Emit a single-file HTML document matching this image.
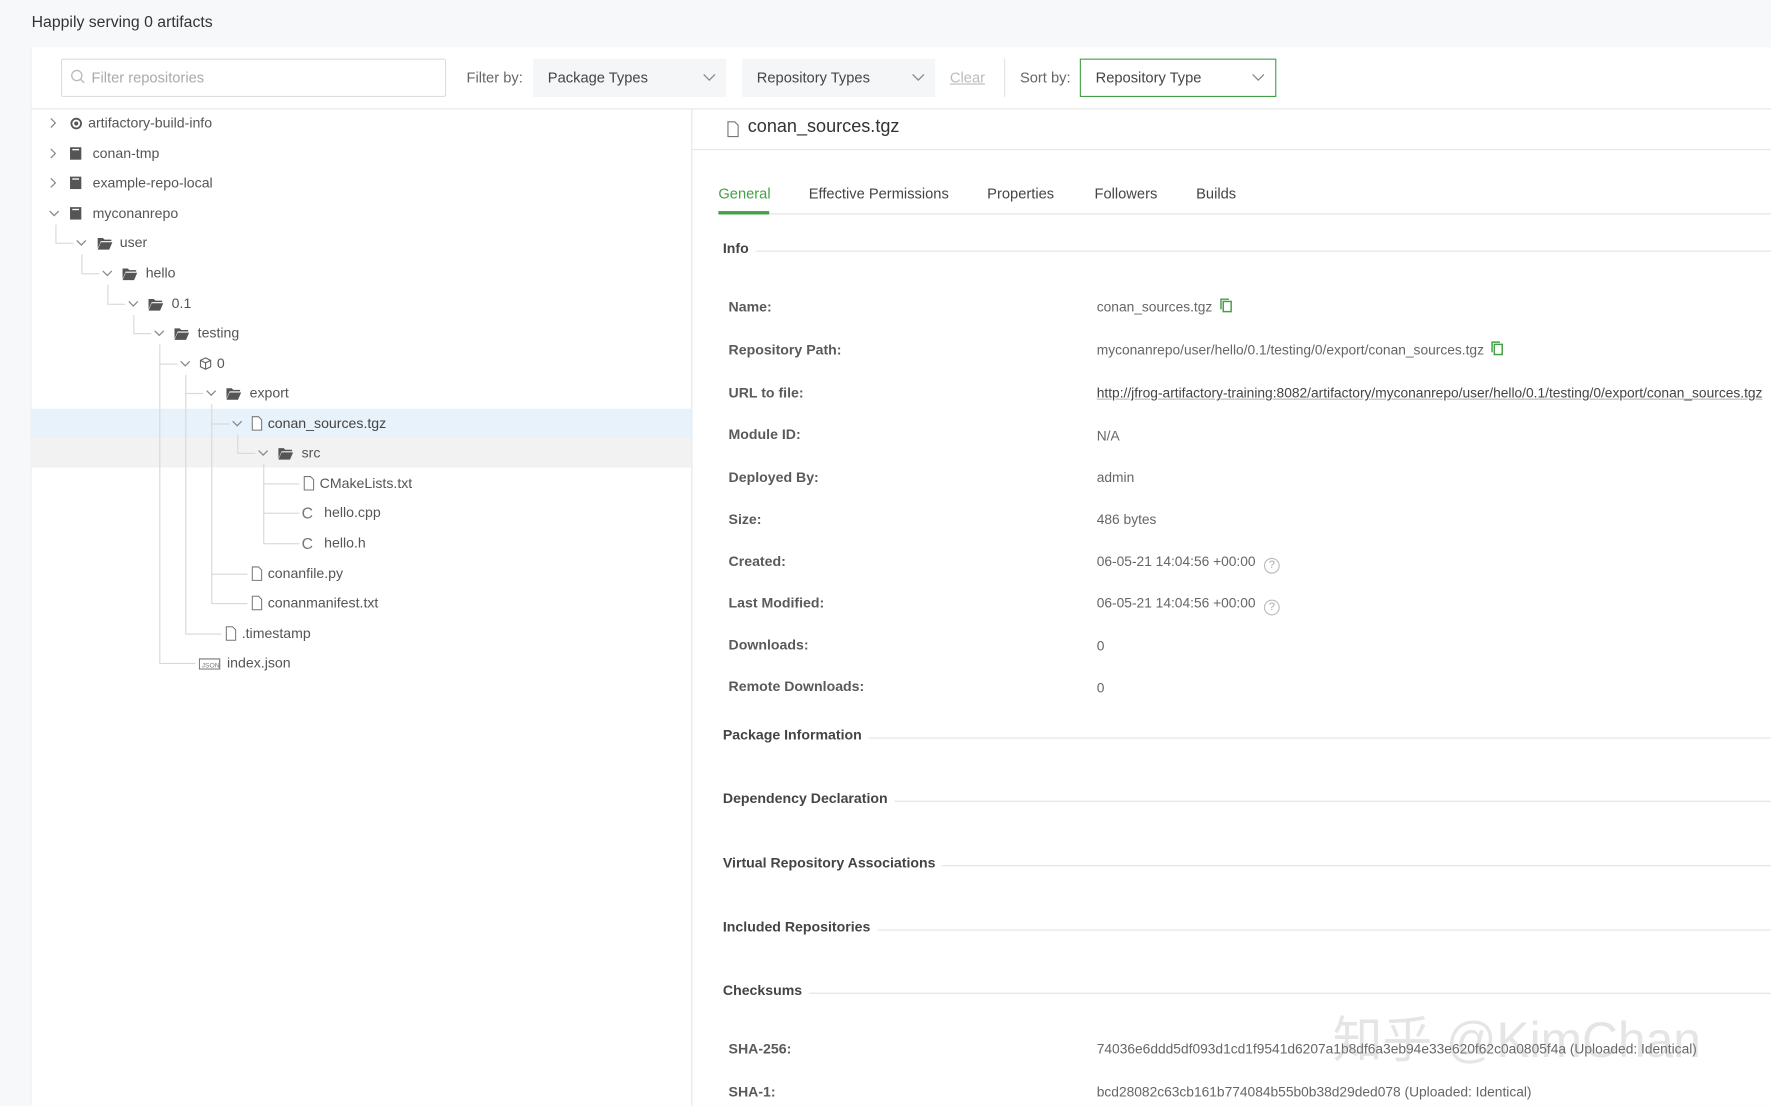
<!DOCTYPE html>
<html><head><meta charset="utf-8"><style>
*{margin:0;padding:0;box-sizing:border-box}
html,body{width:1771px;height:1105px;overflow:hidden;background:#f7f8fa}
#s{position:absolute;left:0;top:0;width:1568px;height:978px;transform:translate(0,1px) scale(1.1295);transform-origin:0 0;font-family:"Liberation Sans","Noto Sans CJK SC",sans-serif;color:#555;font-size:12.5px}
.a{position:absolute;white-space:nowrap}
.r{position:absolute;height:20px;line-height:20px;white-space:nowrap;color:#555;font-size:12.5px}
.vl{position:absolute;width:1px;background:#d8d8d8}
.hl{position:absolute;height:1px;background:#d8d8d8}
.lab{position:absolute;left:645px;color:#5a5a5a;font-size:12.5px;font-weight:600;line-height:20px}
.val{position:absolute;left:971px;color:#666;font-size:12.2px;line-height:20px;white-space:nowrap}
.sec{position:absolute;left:640px;right:0;height:20px;line-height:20px;font-weight:bold;color:#444;font-size:12.5px;display:flex;align-items:center}
.sec:after{content:"";flex:1;height:1px;background:#e3e3e3;margin-left:6px;margin-top:4px}
.dd{position:absolute;top:51px;height:34px;background:#f5f6f7;line-height:34px;padding-left:13px;color:#444;font-size:13px}
</style></head><body><div id="s">
<div class="a" style="left:28px;top:10px;font-size:14px;color:#333">Happily serving 0 artifacts</div>
<div class="a" style="left:27px;top:41px;width:1541px;height:937px;background:#fff;border-left:1px solid #eee"></div>
<div class="hl" style="left:28px;top:95px;width:1540px;background:#e6e6e6"></div>
<div class="a" style="left:54px;top:51px;width:341px;height:34px;border:1px solid #ddd;border-radius:2px"></div>
<svg class="a" style="left:62px;top:60px" width="14" height="14" viewBox="0 0 14 14"><circle cx="6" cy="6" r="4.5" fill="none" stroke="#bbb" stroke-width="1.2"/><path d="M9.3 9.3L12.5 12.5" stroke="#bbb" stroke-width="1.2"/></svg>
<div class="a" style="left:81px;top:60px;color:#aaa;font-size:13px">Filter repositories</div>
<div class="a" style="left:413px;top:60px;color:#666;font-size:13px">Filter by:</div>
<div class="dd" style="left:472px;width:171px">Package Types</div>
<div class="dd" style="left:657px;width:171px">Repository Types</div>
<svg class="a" style="left:622px;top:64px" width="12" height="8"><path d="M1 1l5 5 5-5" fill="none" stroke="#888" stroke-width="1.1"/></svg>
<svg class="a" style="left:807px;top:64px" width="12" height="8"><path d="M1 1l5 5 5-5" fill="none" stroke="#888" stroke-width="1.1"/></svg>
<div class="a" style="left:841px;top:60px;color:#bbb;font-size:13px;text-decoration:underline">Clear</div>
<div class="vl" style="left:889px;top:51px;height:34px;background:#e3e3e3"></div>
<div class="a" style="left:903px;top:60px;color:#666;font-size:13px">Sort by:</div>
<div class="a" style="left:956px;top:51px;width:174px;height:34px;border:1px solid #43a047;line-height:32px;padding-left:13px;color:#444;font-size:13px">Repository Type</div>
<svg class="a" style="left:1108px;top:64px" width="12" height="8"><path d="M1 1l5 5 5-5" fill="none" stroke="#888" stroke-width="1.1"/></svg>

<div class="vl" style="left:612px;top:96px;height:882px;background:#e6e6e6"></div>
<div class="a" style="left:28px;top:361px;width:584px;height:26px;background:#e8f2fa"></div>
<div class="a" style="left:28px;top:387px;width:584px;height:26px;background:#f2f2f2"></div>

<div class="vl" style="left:49px;top:198px;height:16px"></div><div class="hl" style="left:49px;top:214px;width:16px"></div>
<div class="vl" style="left:72px;top:224px;height:17px"></div><div class="hl" style="left:72px;top:241px;width:16px"></div>
<div class="vl" style="left:95px;top:251px;height:17px"></div><div class="hl" style="left:95px;top:268px;width:16px"></div>
<div class="vl" style="left:118px;top:278px;height:16px"></div><div class="hl" style="left:118px;top:294px;width:16px"></div>
<div class="vl" style="left:141px;top:304px;height:282px"></div><div class="hl" style="left:141px;top:321px;width:16px"></div><div class="hl" style="left:141px;top:586px;width:32px"></div>
<div class="vl" style="left:164px;top:331px;height:229px"></div><div class="hl" style="left:164px;top:347px;width:16px"></div><div class="hl" style="left:164px;top:560px;width:32px"></div>
<div class="vl" style="left:187px;top:357px;height:176px"></div><div class="hl" style="left:187px;top:374px;width:16px"></div><div class="hl" style="left:187px;top:507px;width:32px"></div><div class="hl" style="left:187px;top:533px;width:32px"></div>
<div class="vl" style="left:210px;top:384px;height:16px"></div><div class="hl" style="left:210px;top:400px;width:16px"></div>
<div class="vl" style="left:233px;top:410px;height:70px"></div><div class="hl" style="left:233px;top:427px;width:32px"></div><div class="hl" style="left:233px;top:453px;width:32px"></div><div class="hl" style="left:233px;top:480px;width:32px"></div>

<svg width="0" height="0" style="position:absolute"><defs>
<symbol id="cr" viewBox="0 0 10 10"><path d="M3 1l4 4-4 4" fill="none" stroke="#888" stroke-width="1.1"/></symbol>
<symbol id="cd" viewBox="0 0 10 10"><path d="M1 3l4 4 4-4" fill="none" stroke="#888" stroke-width="1.1"/></symbol>
<symbol id="fo" viewBox="0 0 16 14"><path d="M1 2h5l1.5 1.5H14V5H4L1 12z" fill="#555"/><path d="M4 6h11l-3 7H1z" fill="#555"/></symbol>
<symbol id="rp" viewBox="0 0 12 12"><rect x="1" y="0.5" width="10" height="11" fill="#555"/><rect x="3" y="2" width="6" height="1.2" fill="#fff"/></symbol>
<symbol id="fi" viewBox="0 0 12 14"><path d="M1.5 .5h6l3 3v10h-9z" fill="#fff" stroke="#777"/></symbol>
</defs></svg>

<div class="r" style="left:42px;top:98px"><svg width="10" height="10" style="vertical-align:-1px"><use href="#cr"/></svg></div>
<svg class="a" style="left:62px;top:103px" width="11" height="11"><circle cx="5.5" cy="5.5" r="4.3" fill="none" stroke="#555" stroke-width="1.6"/><circle cx="5.5" cy="5.5" r="1.8" fill="#555"/></svg>
<div class="r" style="left:78px;top:98px">artifactory-build-info</div>
<div class="r" style="left:42px;top:125px"><svg width="10" height="10" style="vertical-align:-1px"><use href="#cr"/></svg></div>
<svg class="a" style="left:61px;top:129px" width="12" height="12"><use href="#rp"/></svg><div class="r" style="left:82px;top:125px">conan-tmp</div>
<div class="r" style="left:42px;top:151px"><svg width="10" height="10" style="vertical-align:-1px"><use href="#cr"/></svg></div>
<svg class="a" style="left:61px;top:155px" width="12" height="12"><use href="#rp"/></svg><div class="r" style="left:82px;top:151px">example-repo-local</div>
<div class="r" style="left:43px;top:178px"><svg width="10" height="10" style="vertical-align:-1px"><use href="#cd"/></svg></div>
<svg class="a" style="left:61px;top:182px" width="12" height="12"><use href="#rp"/></svg><div class="r" style="left:82px;top:178px">myconanrepo</div>

<div class="r" style="left:67px;top:204px"><svg width="10" height="10" style="vertical-align:-1px"><use href="#cd"/></svg></div>
<svg class="a" style="left:85px;top:208px" width="16" height="13"><use href="#fo"/></svg><div class="r" style="left:106px;top:204px">user</div>
<div class="r" style="left:90px;top:231px"><svg width="10" height="10" style="vertical-align:-1px"><use href="#cd"/></svg></div>
<svg class="a" style="left:107px;top:235px" width="16" height="13"><use href="#fo"/></svg><div class="r" style="left:129px;top:231px">hello</div>
<div class="r" style="left:113px;top:258px"><svg width="10" height="10" style="vertical-align:-1px"><use href="#cd"/></svg></div>
<svg class="a" style="left:130px;top:262px" width="16" height="13"><use href="#fo"/></svg><div class="r" style="left:152px;top:258px">0.1</div>
<div class="r" style="left:136px;top:284px"><svg width="10" height="10" style="vertical-align:-1px"><use href="#cd"/></svg></div>
<svg class="a" style="left:153px;top:288px" width="16" height="13"><use href="#fo"/></svg><div class="r" style="left:175px;top:284px">testing</div>
<div class="r" style="left:159px;top:311px"><svg width="10" height="10" style="vertical-align:-1px"><use href="#cd"/></svg></div>
<svg class="a" style="left:176px;top:315px" width="12" height="12" viewBox="0 0 12 12"><path d="M6 1l4.5 2.2v5.6L6 11 1.5 8.8V3.2z M1.5 3.2L6 5.4l4.5-2.2 M6 5.4V11" fill="none" stroke="#666"/></svg><div class="r" style="left:192px;top:311px">0</div>
<div class="r" style="left:182px;top:337px"><svg width="10" height="10" style="vertical-align:-1px"><use href="#cd"/></svg></div>
<svg class="a" style="left:199px;top:341px" width="16" height="13"><use href="#fo"/></svg><div class="r" style="left:221px;top:337px">export</div>
<div class="r" style="left:205px;top:364px"><svg width="10" height="10" style="vertical-align:-1px"><use href="#cd"/></svg></div>
<svg class="a" style="left:222px;top:367px" width="11" height="14"><use href="#fi"/></svg><div class="r" style="left:237px;top:364px;color:#444">conan_sources.tgz</div>
<div class="r" style="left:228px;top:390px"><svg width="10" height="10" style="vertical-align:-1px"><use href="#cd"/></svg></div>
<svg class="a" style="left:245px;top:394px" width="16" height="13"><use href="#fo"/></svg><div class="r" style="left:267px;top:390px">src</div>
<svg class="a" style="left:268px;top:420px" width="11" height="14"><use href="#fi"/></svg><div class="r" style="left:283px;top:417px">CMakeLists.txt</div>
<div class="r" style="left:267px;top:443px;color:#777;font-size:14px">C</div><div class="r" style="left:287px;top:443px">hello.cpp</div>
<div class="r" style="left:267px;top:470px;color:#777;font-size:14px">C</div><div class="r" style="left:287px;top:470px">hello.h</div>
<svg class="a" style="left:222px;top:500px" width="11" height="14"><use href="#fi"/></svg><div class="r" style="left:237px;top:497px">conanfile.py</div>
<svg class="a" style="left:222px;top:526px" width="11" height="14"><use href="#fi"/></svg><div class="r" style="left:237px;top:523px">conanmanifest.txt</div>
<svg class="a" style="left:199px;top:553px" width="11" height="14"><use href="#fi"/></svg><div class="r" style="left:214px;top:550px">.timestamp</div>
<svg class="a" style="left:176px;top:580px" width="20" height="12"><rect x=".5" y="2.5" width="18" height="9" fill="#fff" stroke="#777"/><text x="2.5" y="10" font-size="6" fill="#777" font-family="Liberation Sans">JSON</text></svg><div class="r" style="left:201px;top:576px">index.json</div>

<svg class="a" style="left:643px;top:106px" width="12" height="15"><use href="#fi"/></svg>
<div class="a" style="left:662px;top:103px;font-size:16px;color:#333">conan_sources.tgz</div>
<div class="hl" style="left:613px;top:131px;width:955px;background:#e6e6e6"></div>
<div class="hl" style="left:636px;top:188px;width:932px;background:#e3e3e3"></div>
<div class="a" style="left:636px;top:186px;width:45px;height:3px;background:#43a047"></div>
<div class="a" style="left:636px;top:163px;color:#43a047;font-size:13px">General</div>
<div class="a" style="left:716px;top:163px;color:#444;font-size:13px">Effective Permissions</div>
<div class="a" style="left:874px;top:163px;color:#444;font-size:13px">Properties</div>
<div class="a" style="left:969px;top:163px;color:#444;font-size:13px">Followers</div>
<div class="a" style="left:1059px;top:163px;color:#444;font-size:13px">Builds</div>

<div class="sec" style="top:209px">Info</div>
<div class="lab" style="top:261px">Name:</div><div class="val" style="top:261px">conan_sources.tgz <svg width="11" height="13" style="vertical-align:-1px;margin-left:3px"><rect x="3" y="3" width="7" height="9" fill="none" stroke="#43a047" stroke-width="1.3"/><path d="M1 10V1h7" fill="none" stroke="#43a047" stroke-width="1.3"/></svg></div>
<div class="lab" style="top:299px">Repository Path:</div><div class="val" style="top:299px">myconanrepo/user/hello/0.1/testing/0/export/conan_sources.tgz <svg width="11" height="13" style="vertical-align:-1px;margin-left:3px"><rect x="3" y="3" width="7" height="9" fill="none" stroke="#43a047" stroke-width="1.3"/><path d="M1 10V1h7" fill="none" stroke="#43a047" stroke-width="1.3"/></svg></div>
<div class="lab" style="top:337px">URL to file:</div><div class="val" style="top:337px;color:#444;text-decoration:underline;text-decoration-color:#bbb">http://jfrog-artifactory-training:8082/artifactory/myconanrepo/user/hello/0.1/testing/0/export/conan_sources.tgz</div>
<div class="lab" style="top:374px">Module ID:</div><div class="val" style="top:375px">N/A</div>
<div class="lab" style="top:412px">Deployed By:</div><div class="val" style="top:412px">admin</div>
<div class="lab" style="top:449px">Size:</div><div class="val" style="top:449px">486 bytes</div>
<div class="lab" style="top:486px">Created:</div><div class="val" style="top:486px">06-05-21 14:04:56 +00:00 <span style="display:inline-block;width:14px;height:14px;border:1px solid #bbb;border-radius:50%;font-size:10px;line-height:12px;text-align:center;color:#aaa;margin-left:4px;vertical-align:-2px">?</span></div>
<div class="lab" style="top:523px">Last Modified:</div><div class="val" style="top:523px">06-05-21 14:04:56 +00:00 <span style="display:inline-block;width:14px;height:14px;border:1px solid #bbb;border-radius:50%;font-size:10px;line-height:12px;text-align:center;color:#aaa;margin-left:4px;vertical-align:-2px">?</span></div>
<div class="lab" style="top:560px">Downloads:</div><div class="val" style="top:561px">0</div>
<div class="lab" style="top:597px">Remote Downloads:</div><div class="val" style="top:598px">0</div>
<div class="sec" style="top:640px">Package Information</div>
<div class="sec" style="top:696px">Dependency Declaration</div>
<div class="sec" style="top:753px">Virtual Repository Associations</div>
<div class="sec" style="top:810px">Included Repositories</div>
<div class="sec" style="top:866px">Checksums</div>
<div class="lab" style="top:918px">SHA-256:</div><div class="val" style="top:918px">74036e6ddd5df093d1cd1f9541d6207a1b8df6a3eb94e33e620f62c0a0805f4a (Uploaded: Identical)</div>
<div class="lab" style="top:956px">SHA-1:</div><div class="val" style="top:956px">bcd28082c63cb161b774084b55b0b38d29ded078 (Uploaded: Identical)</div>
<div class="a" style="left:1180px;top:884px;font-size:44px;color:rgba(160,160,160,.28);font-family:'Liberation Sans','Noto Sans CJK SC',sans-serif">知乎 @KimChan</div>
</div></body></html>
